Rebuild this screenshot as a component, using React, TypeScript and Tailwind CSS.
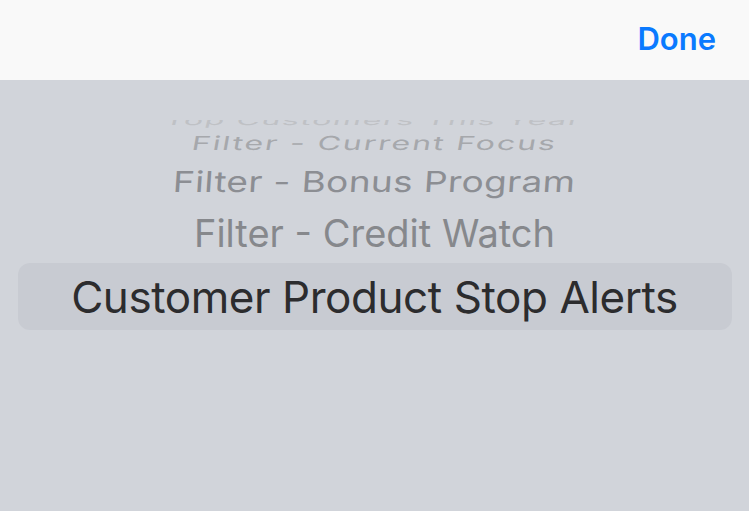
export default function App() {
  return (
    <div
      className="w-[749px] h-[511px] overflow-hidden flex flex-col bg-[#d1d4da]"
      style={{ fontFamily: 'Inter, "Liberation Sans", sans-serif' }}
    >
      <div className="h-[80px] shrink-0 bg-[#f9f9f9] flex items-center justify-end pr-[33px] pb-[4px]">
        <button className="text-[31px] font-semibold text-[#0a7aff] leading-none">Done</button>
      </div>

      <div className="flex-1 flex flex-col items-center">
        <div className="h-[40px] shrink-0" />
        <div className="h-[9px] w-full overflow-hidden flex items-start justify-center">
          <div className="-mt-[6px] text-[32px] leading-none text-[#bfc1c5] scale-y-[0.42] origin-top -skew-x-6 tracking-[0.05em] whitespace-nowrap">
            Top Customers This Year
          </div>
        </div>
        <div className="h-[27px] w-full flex items-center justify-center">
          <div className="text-[32px] leading-none text-[#a6a8ac] scale-y-[0.6] -skew-x-6 tracking-[0.06em] whitespace-nowrap">
            Filter - Current Focus
          </div>
        </div>
        <div className="h-[50px] w-full flex items-center justify-center">
          <div className="text-[37px] leading-none text-[#8c8e93] scale-y-[0.78] -skew-x-3 tracking-[0.01em] whitespace-nowrap">
            Filter - Bonus Program
          </div>
        </div>
        <div className="h-[54px] w-full flex items-center justify-center">
          <div className="text-[38px] leading-none text-[#86888c] whitespace-nowrap">
            Filter - Credit Watch
          </div>
        </div>
        <div className="mt-[3px] h-[67px] w-[714px] rounded-[12px] bg-[#c8cbd2] flex items-center justify-center">
          <div className="text-[44px] leading-none text-[#2c2c2e] tracking-[-0.01em] whitespace-nowrap">
            Customer Product Stop Alerts
          </div>
        </div>
      </div>
    </div>
  );
}
